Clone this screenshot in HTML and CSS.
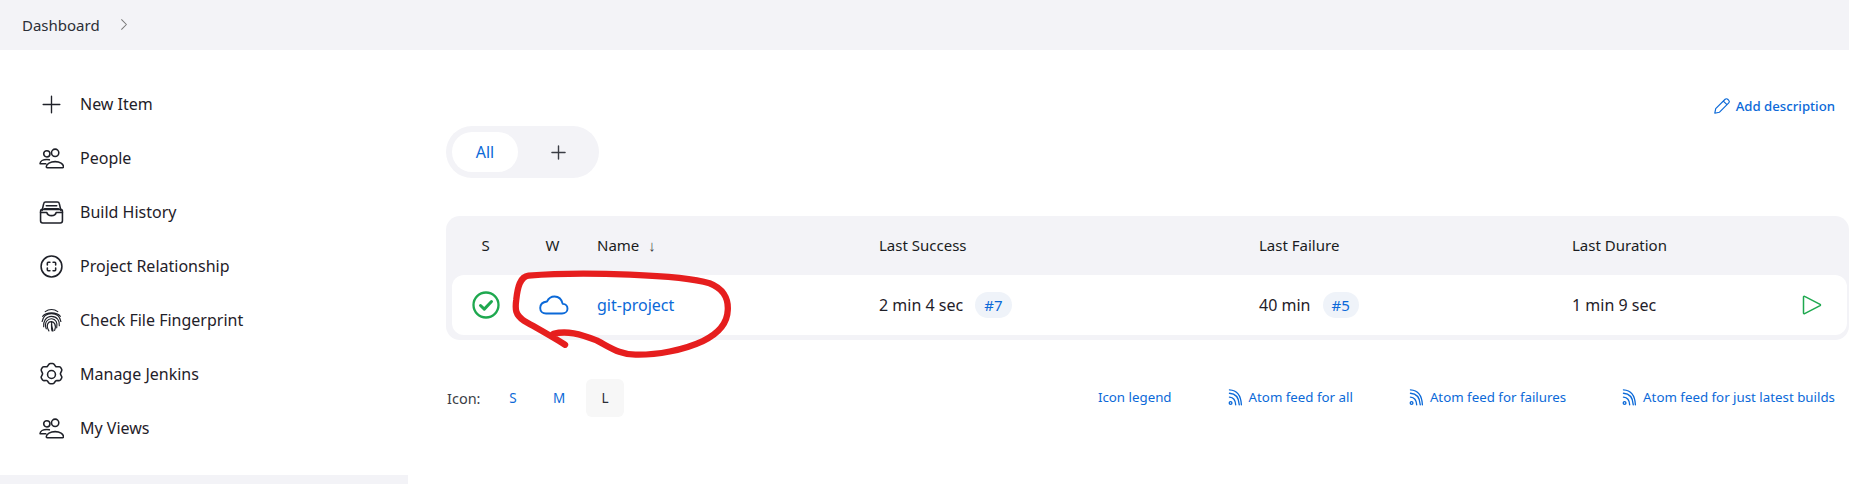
FILE: index.html
```html
<!DOCTYPE html>
<html lang="en">
<head>
<meta charset="UTF-8">
<meta name="viewport" content="width=device-width, initial-scale=1.0">
<title>Dashboard [Jenkins]</title>
<link rel="stylesheet" href="styles.css">
</head>
<body>
<div class="breadcrumb">
    <a href="#">Dashboard</a>
    <svg class="crumb-arrow" viewBox="0 0 10 16"><path d="M2 2l6 6-6 6"/></svg>
</div>
<div class="page">
    <div class="side">
        <a class="side-item" href="#">
            <svg class="side-icon plus" viewBox="0 0 24 24"><path d="M12 4v16M4 12h16"/></svg>
            New Item
        </a>
        <a class="side-item" href="#">
            <svg class="side-icon" viewBox="0 0 24 24"><circle cx="7.500" cy="7.500" r="3"/><circle cx="15.500" cy="6.500" r="3.500"/><path d="M1 17c0-2.500 3-4 6.500-4 .9 0 1.700.1 2.400.3M1 17h5.500M7 20c0-3 4-5 8.500-5s8 2 8 5c0 .5-.3.8-.8.8H7.800c-.5 0-.8-.3-.8-.8z"/></svg>
            People
        </a>
        <a class="side-item" href="#">
            <svg class="side-icon" viewBox="0 0 24 24"><rect x="1.500" y="9" width="21" height="13" rx="2"/><path d="M3 10l1.500-6.500C4.700 2.500 5.400 2 6.300 2h11.400c.9 0 1.600.5 1.800 1.500L21 10M7 5.500h10M5.500 8.500h13M1.500 12h6c.5 2 2 3 4.500 3s4-1 4.500-3h6"/></svg>
            Build History
        </a>
        <a class="side-item" href="#">
            <svg class="side-icon" viewBox="0 0 24 24"><circle cx="12" cy="12" r="10"/><path d="M8 10.500V8.800C8 8.300 8.300 8 8.800 8h1.700M13.500 8h1.700c.5 0 .8.300.8.800v1.700M16 13.500v1.700c0 .5-.3.8-.8.8h-1.700M10.500 16H8.800c-.5 0-.8-.3-.8-.8v-1.700"/></svg>
            Project Relationship
        </a>
        <a class="side-item" href="#">
            <svg class="side-icon thin" viewBox="0 0 24 24"><path d="M6 3.500C9.500.8 14.500.8 18 3.500M3.500 8C7 3.500 17 3.500 20.500 8M3 13c1-5.500 5-7.500 9-7.500s8 2 9 7.500M4.500 18C4 13 6.500 8 12 8s8 4.500 7.500 9M7 20c-1-2.500-1-5.500.5-7.500 2.300-3 7-3 9 .5 1 1.800 1 4 .5 6M9.500 22c-1.500-2.500-2-5-1-7 1.200-2.500 5-2.500 6.500 0 1 1.800.8 4.500 0 6.500M12 13c0 3.500.5 6.500 1.500 9M12 15.500c0 2.500-.2 4.500.5 6.500"/></svg>
            Check File Fingerprint
        </a>
        <a class="side-item" href="#">
            <svg class="side-icon" viewBox="0 0 24 24"><circle cx="12" cy="12" r="3.800"/><path d="M9.500 2.200c.4-.5 1-.7 1.500-.7h2c.6 0 1.100.3 1.500.7l1.400 2c.3.3.7.5 1.100.4l2.300-.1c.6 0 1.100.2 1.400.7l1 1.700c.3.500.3 1.100 0 1.600l-1 2.100c-.2.400-.2.800 0 1.200l1 2.100c.3.500.3 1.100 0 1.600l-1 1.700c-.3.500-.8.700-1.400.7l-2.300-.1c-.4 0-.8.100-1.100.4l-1.400 2c-.4.500-.9.700-1.500.7h-2c-.5 0-1.100-.2-1.500-.7l-1.400-2c-.3-.3-.7-.5-1.100-.4l-2.300.1c-.6 0-1.100-.2-1.400-.7l-1-1.700c-.3-.5-.3-1.100 0-1.600l1-2.100c.2-.4.2-.8 0-1.200l-1-2.100c-.3-.5-.3-1.100 0-1.600l1-1.700c.3-.5.8-.7 1.400-.7l2.300.1c.4 0 .8-.1 1.100-.4z"/></svg>
            Manage Jenkins
        </a>
        <a class="side-item" href="#">
            <svg class="side-icon" viewBox="0 0 24 24"><circle cx="7.500" cy="7.500" r="3"/><circle cx="15.500" cy="6.500" r="3.500"/><path d="M1 17c0-2.500 3-4 6.500-4 .9 0 1.700.1 2.400.3M1 17h5.500M7 20c0-3 4-5 8.500-5s8 2 8 5c0 .5-.3.8-.8.8H7.800c-.5 0-.8-.3-.8-.8z"/></svg>
            My Views
        </a>
        <div class="side-bar"></div>
    </div>
    <div class="main">
        <div class="main-actions">
            <a class="add-desc" href="#">
                <svg class="pencil" viewBox="0 0 20 20"><path d="M2 18l1-5L13.500 2.500c.8-.8 2-.8 2.800 0l1.200 1.200c.8.8.8 2 0 2.800L7 17zM2 18l5-1M11.500 4.500l4 4"/></svg>
                Add description
            </a>
        </div>
        <div class="tabs">
            <a class="tab active" href="#">All</a>
            <a class="tab" href="#"><svg class="tab-plus" viewBox="0 0 16 16"><path d="M8 1v14M1 8h14"/></svg></a>
        </div>
        <div class="job-table">
            <div class="job-row job-head">
                <div class="col-s">S</div>
                <div class="col-w">W</div>
                <div class="col-name">Name <span class="sort">↓</span></div>
                <div class="col-success">Last Success</div>
                <div class="col-failure">Last Failure</div>
                <div class="col-duration">Last Duration</div>
                <div class="col-run"></div>
            </div>
            <div class="job-row job-body">
                <div class="col-s">
                    <svg class="status" viewBox="0 0 28 28"><circle cx="14" cy="14" r="12.500"/><path class="tick" d="M8.500 14.500l3.800 3.600 7.200-7.600"/></svg>
                </div>
                <div class="col-w">
                    <svg class="cloud" viewBox="0 0 30 20"><path d="M7 18.500h16c3 0 5.500-2 5.500-4.800 0-2.600-2-4.600-4.800-4.800C22.700 4.500 19.500 1.500 15.500 1.500 12 1.500 9.500 3.500 8 6.500 4 7 1.200 9.500 1.200 13 1.200 16.500 3.800 18.500 7 18.500z"/></svg>
                </div>
                <div class="col-name"><a href="#">git-project</a></div>
                <div class="col-success">2 min 4 sec <a class="build" href="#">#7</a></div>
                <div class="col-failure">40 min <a class="build" href="#">#5</a></div>
                <div class="col-duration">1 min 9 sec</div>
                <div class="col-run">
                    <svg class="play" viewBox="0 0 20 20"><path d="M1.500 2v16c0 .6.600.9 1.100.6l15.500-8c.5-.3.5-.9 0-1.200L2.600 1.400C2.100 1.100 1.500 1.400 1.500 2z"/></svg>
                </div>
            </div>
            <svg class="scribble" viewBox="240 480 670 265"><path d="M370 672C410 662 450 672 500 692 540 712 570 736 620 735 680 736 760 722 820 694 865 672 894 640 895 600 897 565 880 535 840 520 790 505 700 498 600 494 500 490 380 490 295 497 270 500 262 530 258 570 254 600 256 615 280 632 320 655 365 680 405 705"/></svg>
        </div>
        <div class="foot">
            <div class="icon-size">
                <span class="icon-label">Icon:</span>
                <a class="size" href="#">S</a>
                <a class="size" href="#">M</a>
                <span class="size current">L</span>
            </div>
            <div class="foot-links">
                <a href="#">Icon legend</a>
                <a href="#"><svg class="rss" viewBox="0 0 16 20"><circle cx="2.800" cy="16.500" r="1.600"/><path d="M1.500 9.500c4 .3 7 3.500 7.300 9M1.500 5c6.500.3 11 5 11.500 13.500M1.500 1c9 .5 13.500 7 14 17.500"/></svg>Atom feed for all</a>
                <a href="#"><svg class="rss" viewBox="0 0 16 20"><circle cx="2.800" cy="16.500" r="1.600"/><path d="M1.500 9.500c4 .3 7 3.500 7.300 9M1.500 5c6.500.3 11 5 11.500 13.500M1.500 1c9 .5 13.500 7 14 17.500"/></svg>Atom feed for failures</a>
                <a href="#"><svg class="rss" viewBox="0 0 16 20"><circle cx="2.800" cy="16.500" r="1.600"/><path d="M1.500 9.500c4 .3 7 3.500 7.300 9M1.500 5c6.500.3 11 5 11.500 13.500M1.500 1c9 .5 13.500 7 14 17.500"/></svg>Atom feed for just latest builds</a>
            </div>
        </div>
    </div>
</div>
</body>
</html>
```

FILE: styles.css
```css
* {
    box-sizing: border-box;
}
body {
    margin: 0;
    height: 484px;
    overflow: hidden;
    background: #fff;
    color: #1f2129;
    font-family: "Noto Sans", Arial, sans-serif;
    font-size: 16px;
}
a {
    color: #0b69d8;
    text-decoration: none;
}
svg {
    fill: none;
    stroke: currentColor;
    stroke-linecap: round;
    stroke-linejoin: round;
}
.breadcrumb {
    display: flex;
    align-items: center;
    height: 50px;
    padding-left: 22px;
    background: #f3f3f7;
    font-size: 15px;
}
.breadcrumb a {
    margin-top: -1px;
    color: #2c2e36;
}
.crumb-arrow {
    width: 8px;
    height: 13px;
    margin-left: 20px;
    margin-top: -2px;
    color: #777;
    stroke-width: 1.300;
}
.page {
    display: flex;
}
.side {
    width: 408px;
    flex-shrink: 0;
    padding-top: 27px;
}
.side-item {
    display: flex;
    align-items: center;
    height: 54px;
    padding-left: 39px;
    color: #1f2129;
}
.side-icon {
    width: 25px;
    height: 25px;
    margin-right: 16px;
    stroke-width: 1.500;
}
.side-icon.plus {
    stroke-width: 1.300;
}
.side-icon.thin {
    stroke-width: 1.100;
}
.side-bar {
    height: 9px;
    margin-top: 20px;
    background: #f3f3f7;
}
.main {
    flex: 1;
    position: relative;
    padding-left: 38px;
}
.main-actions {
    display: flex;
    justify-content: flex-end;
    height: 76px;
    padding: 46px 14px 0 0;
}
.add-desc {
    display: flex;
    align-items: center;
    height: 20px;
    font-size: 13.200px;
    font-weight: 500;
}
.pencil {
    width: 18px;
    height: 18px;
    margin-right: 5px;
    stroke-width: 1.300;
}
.tabs {
    display: flex;
    width: 153px;
    height: 52px;
    padding: 6px;
    border-radius: 26px;
    background: #f3f3f7;
}
.tab {
    display: flex;
    align-items: center;
    justify-content: center;
    width: 66px;
    height: 40px;
    border-radius: 20px;
}
.tab + .tab {
    width: 75px;
    padding-left: 5px;
}
.tab.active {
    padding-bottom: 1px;
    background: #fff;
}
.tab-plus {
    width: 15px;
    height: 15px;
    color: #3a3c44;
    stroke-width: 1.500;
}
.job-table {
    position: relative;
    margin-top: 38px;
    padding: 0 2px 5px 6px;
    border-radius: 14px;
    background: #f3f3f7;
}
.job-row {
    display: flex;
    align-items: center;
}
.job-head {
    height: 59px;
    padding-bottom: 2px;
    color: #1a1c22;
    font-size: 15px;
}
.job-body {
    height: 60px;
    padding-bottom: 1px;
    border-radius: 12px;
    background: #fff;
}
.col-s {
    width: 67px;
    text-align: center;
}
.col-w {
    width: 67px;
    text-align: center;
}
.col-name {
    width: 293px;
    padding-left: 11px;
}
.col-success {
    width: 380px;
}
.col-failure {
    width: 313px;
}
.col-duration {
    width: 220px;
}
.col-run {
    width: 40px;
}
.col-s svg,
.col-w svg,
.col-run svg {
    display: block;
    margin: auto;
}
.job-body .col-w {
    padding-left: 3px;
}
.sort {
    margin-left: 5px;
    color: #444;
}
.status {
    width: 28px;
    height: 28px;
    color: #1ea84f;
    stroke-width: 2.300;
}
.tick {
    stroke-width: 3;
}
.cloud {
    width: 30px;
    height: 20px;
    color: #0b69d8;
    stroke-width: 1.900;
}
.play {
    width: 20px;
    height: 20px;
    color: #1ea84f;
    stroke-width: 1.500;
}
.build {
    display: inline-block;
    margin-left: 8px;
    padding: 3px 9px;
    border-radius: 14px;
    background: #eff3f9;
    font-size: 15px;
}
.scribble {
    position: absolute;
    left: 64px;
    top: 54px;
    width: 223px;
    height: 88px;
    color: #e61e1e;
    stroke-width: 19;
}
.foot {
    display: flex;
    justify-content: space-between;
    align-items: center;
    height: 38px;
    margin-top: 39px;
    padding-right: 14px;
}
.icon-size {
    display: flex;
    align-items: center;
    font-size: 14.500px;
}
.icon-label {
    width: 48px;
    padding-left: 1px;
    padding-bottom: 1px;
    color: #3c3e46;
}
.size {
    display: flex;
    align-items: center;
    justify-content: center;
    width: 38px;
    height: 38px;
    margin-right: 8px;
    padding-bottom: 1px;
    border-radius: 6px;
    font-size: 13.500px;
}
.size.current {
    background: #f7f7f7;
    color: #2c2e36;
}
.foot-links {
    display: flex;
    gap: 55px;
    padding-bottom: 2px;
    font-size: 13.300px;
}
.foot-links a {
    display: flex;
    align-items: center;
}
.rss {
    width: 16px;
    height: 17px;
    margin-right: 6px;
    stroke-width: 1.600;
}
```
